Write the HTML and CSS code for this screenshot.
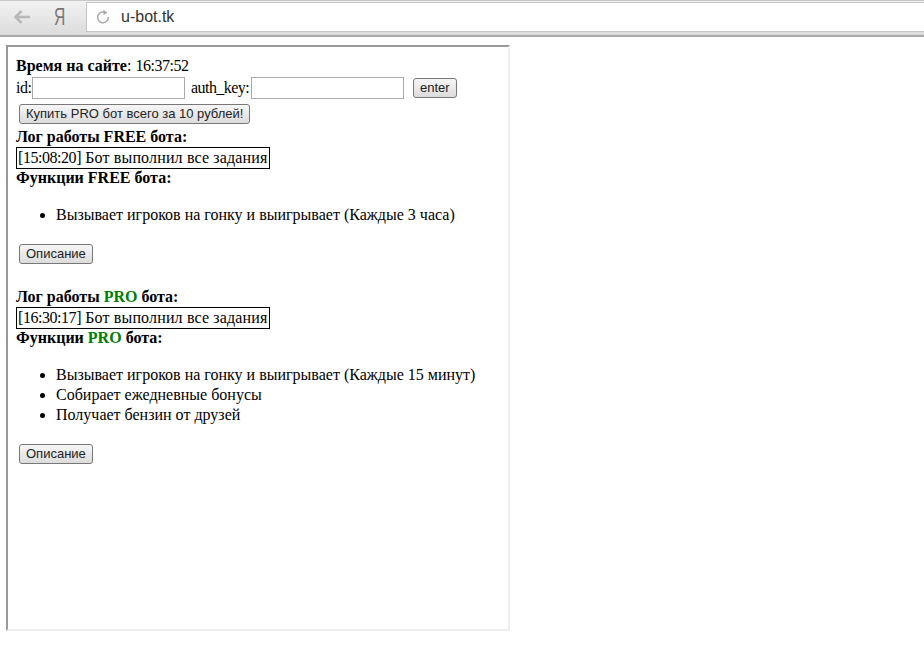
FILE: index.html

```html
<!DOCTYPE html>
<html>
<head>
  <title>u-bot.tk</title>
  <link rel="stylesheet" href="styles.css">
</head>
<body>

  <div class="toolbar">
    <svg class="back-icon" width="16" height="14" viewBox="0 0 16 14">
      <path d="M7.5 1 L1.6 7 L7.5 13 M1.6 7 H16" fill="none" stroke="#b8b8b8" stroke-width="2.6"/>
    </svg>
    <span class="ya-logo">Я</span>
    <div class="address">
      <svg class="reload-icon" width="16" height="16" viewBox="0 0 16 16">
        <path d="M10.5 3.6 A5.4 5.4 0 1 0 13.4 8" fill="none" stroke="#a8a8a8" stroke-width="1.5"/>
        <path d="M8.5 0.8 L12.4 3.8 L8.5 6 Z" fill="#a8a8a8"/>
      </svg>
      <span class="url">u-bot.tk</span>
    </div>
  </div>

  <div class="frame">
    <div class="row"><b>Время на сайте</b>: <span class="stamp">16:37:52</span></div>

    <div class="login-row">
      <label class="id-label">id:</label><input type="text" class="field">
      <label class="key-label">auth_key:</label><input type="text" class="field">
      <button class="btn btn-enter">enter</button>
    </div>

    <button class="btn btn-buy">Купить PRO бот всего за 10 рублей!</button>

    <div class="row"><b>Лог работы FREE бота:</b></div>
    <div class="log"><span class="stamp">[15:08:20]</span> Бот выполнил все задания</div>
    <div class="row"><b>Функции FREE бота:</b></div>
    <ul>
      <li>Вызывает игроков на гонку и выигрывает (Каждые 3 часа)</li>
    </ul>
    <button class="btn">Описание</button>

    <div class="row row-gap"><b>Лог работы <span class="pro">PRO</span> бота:</b></div>
    <div class="log"><span class="stamp">[16:30:17]</span> Бот выполнил все задания</div>
    <div class="row"><b>Функции <span class="pro">PRO</span> бота:</b></div>
    <ul>
      <li>Вызывает игроков на гонку и выигрывает (Каждые 15 минут)</li>
      <li>Собирает ежедневные бонусы</li>
      <li>Получает бензин от друзей</li>
    </ul>
    <button class="btn">Описание</button>
  </div>

</body>
</html>
```

FILE: styles.css

```css
body {
  margin: 0;
  background: white;
  font-family: "Liberation Serif", serif;
  font-size: 16px;
  color: black;
}
.toolbar {
  display: flex;
  align-items: center;
  box-sizing: border-box;
  height: 37px;
  padding: 1px 0 3px 14px;
  background: linear-gradient(#f2f2f2, #dcdcdc);
  border-top: 1px solid #c8c8c8;
  border-bottom: 2px solid #a8a8a8;
}
.back-icon {
  margin-right: 24px;
}
.ya-logo {
  display: inline-block;
  width: 32px;
  font-family: "Liberation Sans", sans-serif;
  font-size: 24px;
  color: #777;
  transform: scaleX(0.65);
  transform-origin: left center;
}
.address {
  display: flex;
  align-items: center;
  flex: 1;
  height: 28px;
  padding-left: 8px;
  background: white;
  border: 1px solid #c4c4c4;
  border-right: none;
}
.url {
  margin-left: 10px;
  font-family: "Liberation Sans", sans-serif;
  font-size: 16px;
  color: #333;
}
.frame {
  box-sizing: border-box;
  width: 504px;
  height: 586px;
  margin: 8px 0 0 6px;
  padding: 10px 8px 8px;
  border: 2px solid;
  border-color: #999 #eee #eee #999;
}
.row {
  line-height: 18px;
}
.row-gap {
  margin-top: 24px;
}
.stamp {
  letter-spacing: -0.45px;
}
.login-row {
  display: flex;
  align-items: center;
  height: 24px;
  margin-top: 1px;
}
.id-label {
  width: 15px;
  letter-spacing: -0.5px;
}
.key-label {
  width: 59px;
  margin-left: 6px;
  letter-spacing: -0.55px;
}
.field {
  box-sizing: border-box;
  width: 153px;
  height: 22px;
  margin: 0 0 0 1px;
  padding: 1px 2px;
  background: white;
  border: 1px solid #aaa;
}
.btn {
  display: block;
  height: 20px;
  margin: 0 0 0 3px;
  padding: 0 6px;
  background: linear-gradient(#f6f6f6, #dcdcdc);
  border: 1px solid #777;
  border-radius: 3px;
  font-family: "Liberation Sans", sans-serif;
  font-size: 13px;
  line-height: 18px;
  color: #222;
}
.btn-enter {
  margin-left: 9px;
}
.btn-buy {
  margin-top: 4px;
  margin-bottom: 4px;
}
.log {
  width: fit-content;
  margin-top: 1px;
  padding: 1px;
  border: 1px solid black;
  line-height: 18px;
  letter-spacing: 0.15px;
}
.log .stamp {
  letter-spacing: -0.45px;
}
.pro {
  color: green;
}
ul {
  margin: 18px 0 19px;
  padding-left: 40px;
}
li {
  line-height: 20px;
}
```
